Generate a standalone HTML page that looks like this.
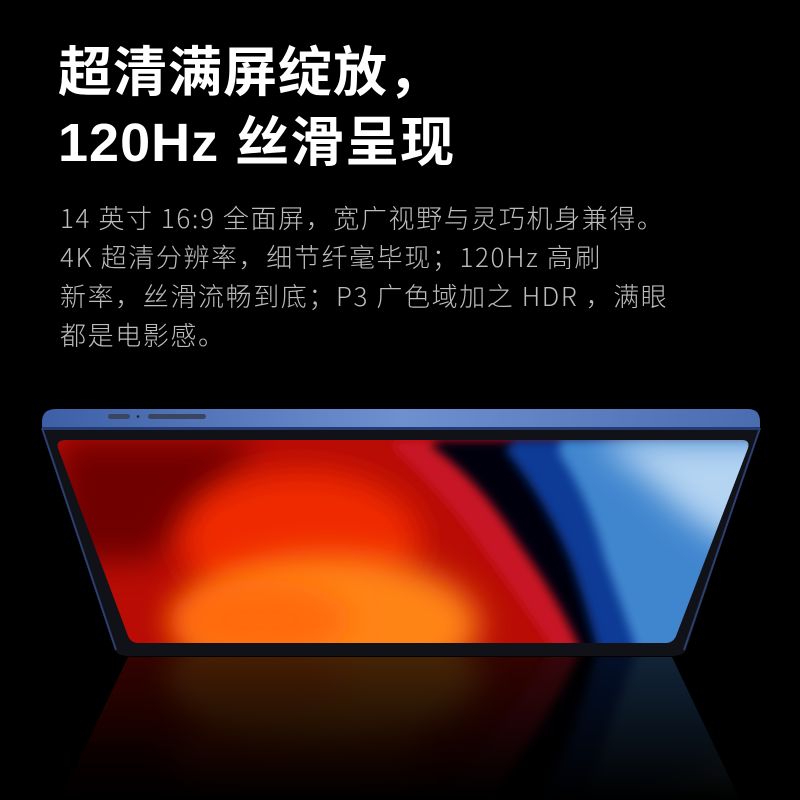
<!DOCTYPE html>
<html><head><meta charset="utf-8">
<style>
html,body{margin:0;padding:0;background:#000;}
body{width:800px;height:800px;position:relative;overflow:hidden;font-family:"Liberation Sans","Noto Sans CJK SC",sans-serif;}
.t{position:absolute;left:58px;color:#fff;font-weight:700;font-size:54px;line-height:70px;top:38px;letter-spacing:1px;}
.b{position:absolute;left:60px;top:198px;color:#bcbcbc;font-family:"Noto Sans CJK SC",sans-serif;font-size:26px;line-height:39px;font-weight:300;letter-spacing:1.6px;white-space:nowrap;}
svg{position:absolute;left:0;top:0;}
</style></head><body>
<svg width="800" height="800" viewBox="0 0 800 800">
<defs>
<filter id="bl" x="-30%" y="-30%" width="160%" height="160%"><feGaussianBlur stdDeviation="16"/></filter>
<filter id="bl2" x="-20%" y="-20%" width="140%" height="140%"><feGaussianBlur stdDeviation="5"/></filter>
<clipPath id="scr"><path d="M66 440 L742 440 Q750 440 748 448 L676 636 Q673 643 665 643 L138 643 Q131 643 128 636 L58 448 Q56 440 66 440Z"/></clipPath>
<clipPath id="ref"><path d="M128 657 L672 657 L740 800 L60 800Z"/></clipPath>
<linearGradient id="frame" x1="0" y1="0" x2="1" y2="0"><stop offset="0" stop-color="#3d5fa6"/><stop offset="0.5" stop-color="#6f90cf"/><stop offset="1" stop-color="#4a6cb0"/></linearGradient>
<linearGradient id="refl" x1="0" y1="0" x2="0" y2="1"><stop offset="0" stop-color="#000" stop-opacity="0.4"/><stop offset="1" stop-color="#000" stop-opacity="1"/></linearGradient>
<g id="content">
<rect x="40" y="430" width="720" height="230" fill="#b80c04"/>
<path d="M60 440 L260 440 L150 560 L60 560Z" fill="#700402" filter="url(#bl)"/>
<ellipse cx="300" cy="540" rx="120" ry="70" fill="#f02a06" filter="url(#bl)"/>
<ellipse cx="330" cy="625" rx="150" ry="70" fill="#ff8418" filter="url(#bl)"/>
<ellipse cx="260" cy="620" rx="90" ry="40" fill="#ff6a10" filter="url(#bl)"/>
<path d="M400 440 L800 440 L800 660 L560 660 Q520 600 490 560 Q450 500 390 445Z" fill="#c81428" filter="url(#bl2)"/>
<path d="M440 440 L800 440 L800 660 L585 660 Q560 600 520 545 Q480 480 430 445Z" fill="#040410" filter="url(#bl2)"/>
<path d="M515 440 L800 440 L800 660 L600 660 Q585 600 570 560 Q545 500 505 450Z" fill="#0a3a96" filter="url(#bl2)"/>
<path d="M560 440 L800 440 L800 660 L640 660 Q620 600 605 560 Q590 500 560 455Z" fill="#3f86cf" filter="url(#bl2)"/>
<path d="M600 440 L800 440 L800 580 Q720 540 680 510 Q640 470 605 448Z" fill="#b4d4f2" filter="url(#bl)"/>
</g>
</defs>
<g clip-path="url(#ref)" opacity="0.45">
<g transform="translate(0,1300) scale(1,-1)"><use href="#content"/></g>
</g>
<path d="M118 657 L682 657 L760 800 L40 800Z" fill="url(#refl)"/>
<path d="M56 409 L748 409 Q760 409 760 422 L760 428 L686 650 Q683 656 672 656 L128 656 Q118 656 115 650 L42 430 L42 422 Q42 409 56 409Z" fill="#101218"/>
<path d="M56 409 L748 409 Q760 409 760 422 L760 427 L42 427 L42 422 Q42 409 56 409Z" fill="url(#frame)"/>
<path d="M42 427 L760 427 L760 430 L42 430Z" fill="#243a70"/>
<path d="M42 428 L116 650" stroke="#2b3f70" stroke-width="2"/>
<path d="M760 428 L684 650" stroke="#2b3f70" stroke-width="2"/>
<rect x="108" y="414" width="22" height="5" rx="2.5" fill="#3a4660"/>
<circle cx="138" cy="416.5" r="1.3" fill="#1b2133"/>
<rect x="148" y="414" width="58" height="5" rx="2.5" fill="#3a4660"/>
<g clip-path="url(#scr)"><use href="#content"/></g>
</svg>
<div class="t">超清满屏绽放，<br>120Hz 丝滑呈现</div>
<div class="b">14 英寸 16:9 全面屏，宽广视野与灵巧机身兼得。<br>4K 超清分辨率，细节纤毫毕现；120Hz 高刷<br>新率，丝滑流畅到底；P3 广色域加之 HDR ，满眼<br>都是电影感。</div>
</body></html>
